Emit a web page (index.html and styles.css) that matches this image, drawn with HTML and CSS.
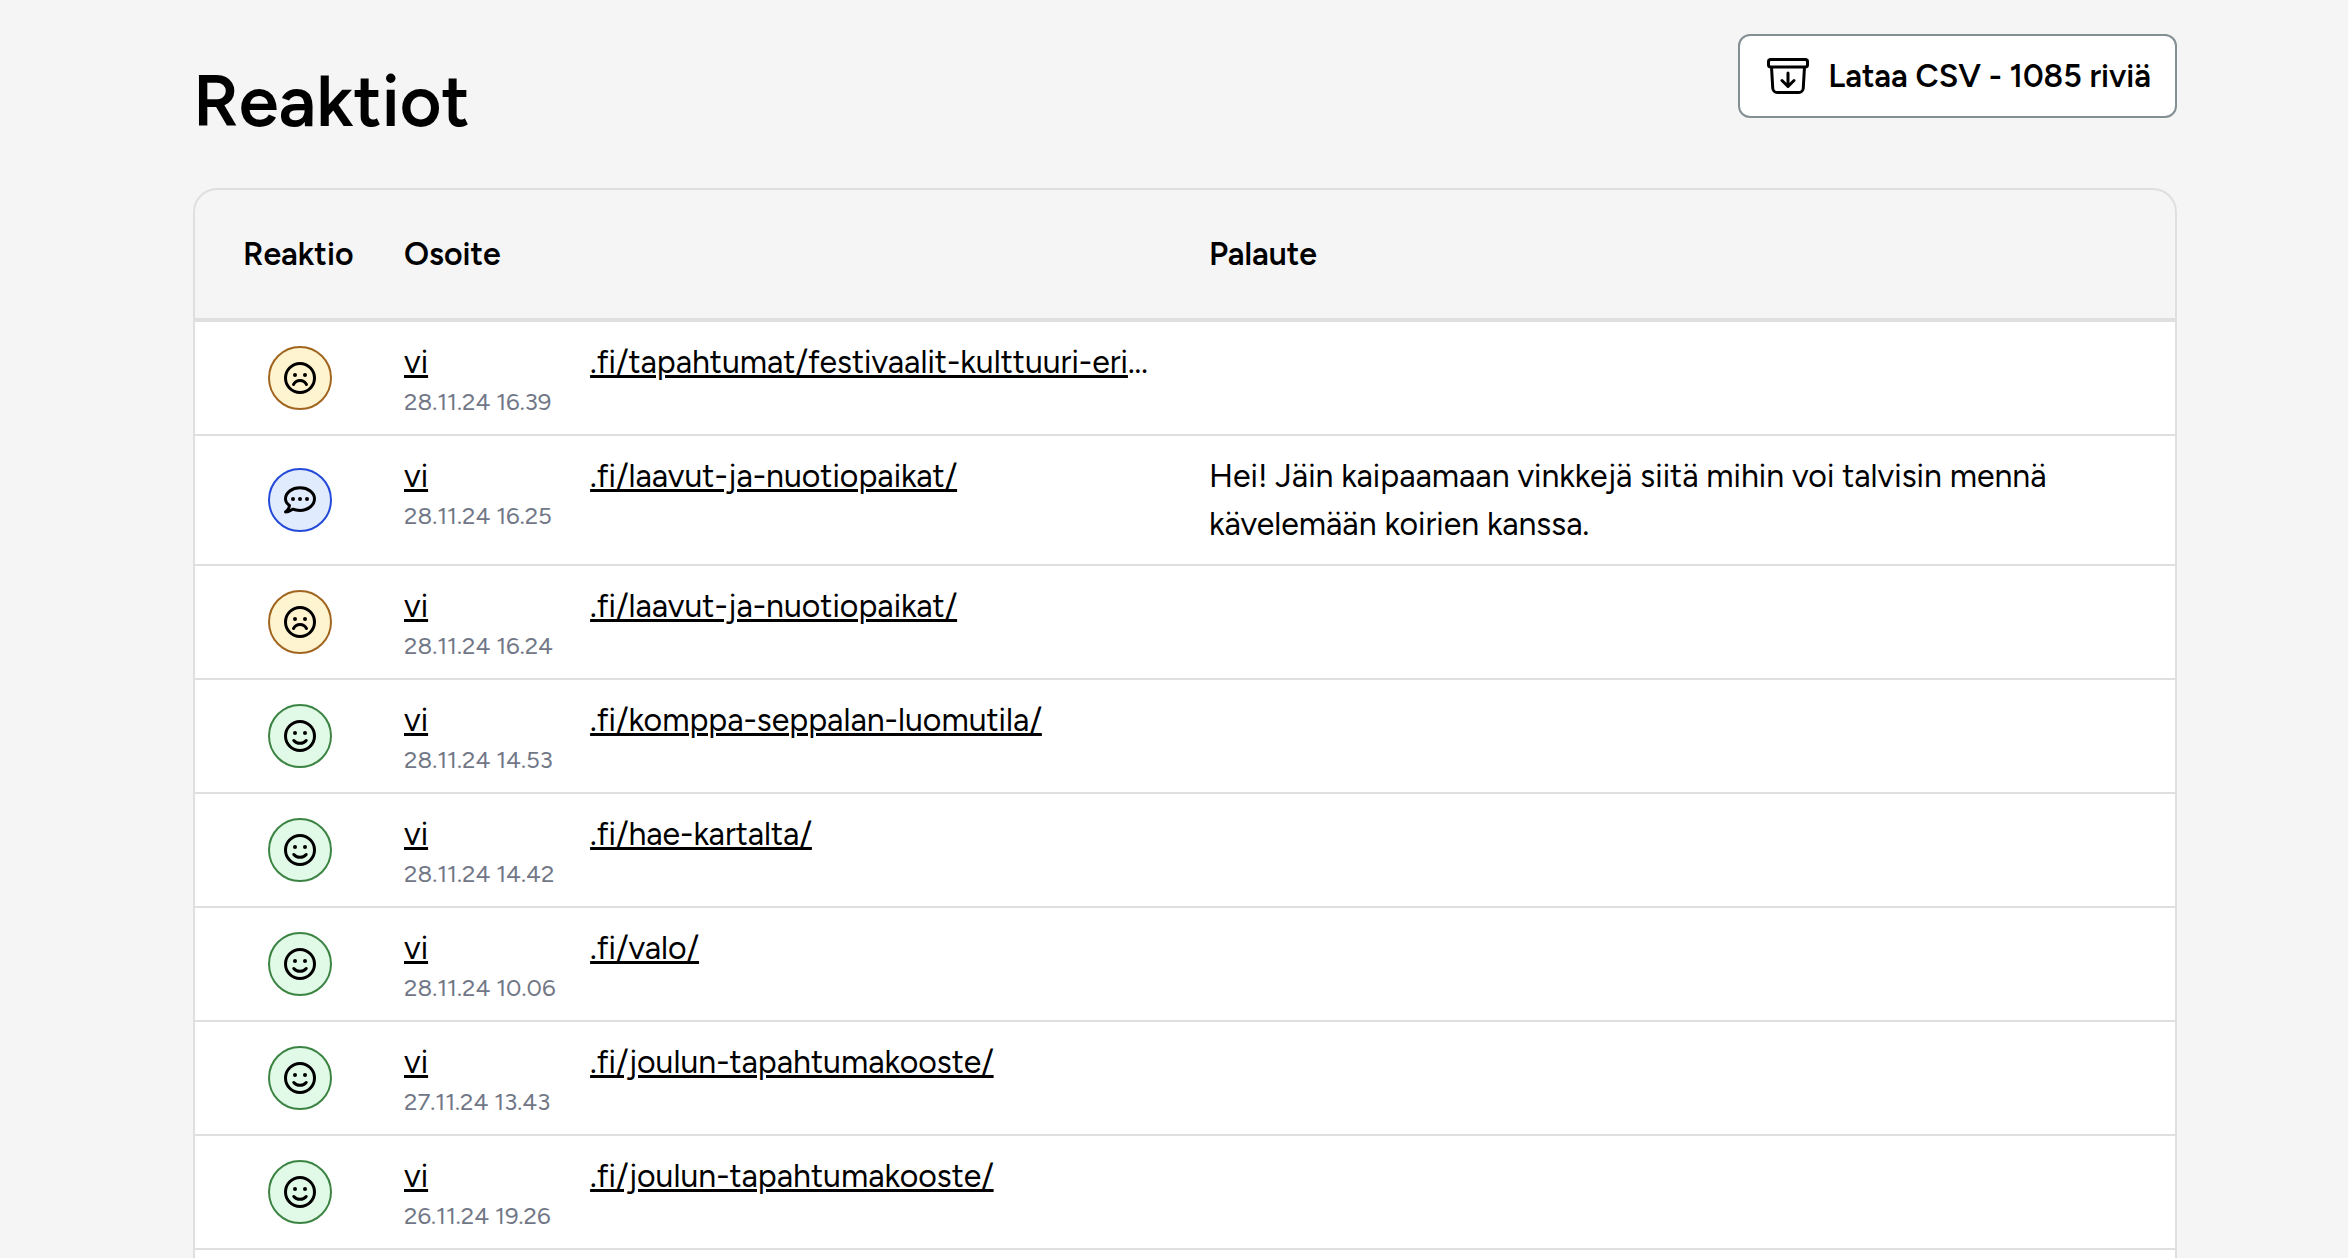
FILE: index.html
```
<!DOCTYPE html>
<html lang="fi">
<head>
<meta charset="UTF-8">
<meta name="viewport" content="width=device-width, initial-scale=1.0">
<title>Reaktiot</title>
<link rel="stylesheet" href="styles.css">
</head>
<body>

<!-- shared icons -->
<svg class="sprite" aria-hidden="true">
    <symbol id="icon-sad" viewBox="0 0 32 32">
        <circle cx="16" cy="16" r="14.5" fill="none" stroke="currentColor" stroke-width="3"/>
        <circle cx="11" cy="13" r="2"/>
        <circle cx="21" cy="13" r="2"/>
        <path d="M9.500 22.500C11 19.700 13.500 18.500 16 18.500S21 19.700 22.500 22.500" fill="none" stroke="currentColor" stroke-width="3" stroke-linecap="round"/>
    </symbol>
    <symbol id="icon-happy" viewBox="0 0 32 32">
        <circle cx="16" cy="16" r="14.5" fill="none" stroke="currentColor" stroke-width="3"/>
        <circle cx="11" cy="13" r="2"/>
        <circle cx="21" cy="13" r="2"/>
        <path d="M9.800 20.500C11.300 22.300 13.300 23.300 16 23.300S20.700 22.300 22.200 20.500" fill="none" stroke="currentColor" stroke-width="3" stroke-linecap="round"/>
    </symbol>
    <symbol id="icon-comment" viewBox="0 0 32 32">
        <path d="M5.500 21.500C2.800 19.800 1.500 17.300 1.500 14.800C1.500 8.500 8 3.800 16 3.800S30.500 8.500 30.500 14.800S24 26.400 16 26.400C13.200 26.400 10.800 26 8.700 25.200C6.500 26.700 4 27.800 1.500 28C3.600 26.300 5.300 24 5.500 21.500Z" fill="none" stroke="currentColor" stroke-width="3" stroke-linejoin="round"/>
        <circle cx="9" cy="15" r="2"/>
        <circle cx="16" cy="15" r="2"/>
        <circle cx="23" cy="15" r="2"/>
    </symbol>
</svg>

<div class="container">
    <div class="header">
        <h1>Reaktiot</h1>
        <button type="button" class="download">
            <svg class="download-icon" viewBox="0 0 24 24" fill="none" stroke="currentColor" stroke-width="1.5" stroke-linecap="round" stroke-linejoin="round" aria-hidden="true"><path d="m20.250 7.500-.625 10.632a2.250 2.250 0 0 1-2.247 2.118H6.622a2.250 2.250 0 0 1-2.247-2.118L3.750 7.500m8.250 3v6.750m0 0-3-3m3 3 3-3M3.375 7.500h17.250c.621 0 1.125-.504 1.125-1.125v-1.500c0-.621-.504-1.125-1.125-1.125H3.375c-.621 0-1.125.504-1.125 1.125v1.500c0 .621.504 1.125 1.125 1.125Z"/></svg>
            Lataa CSV - 1085 riviä
        </button>
    </div>

    <div class="table-wrap">
    <table>
        <colgroup>
            <col class="col-reaction">
            <col class="col-address">
            <col>
        </colgroup>
        <thead>
            <tr>
                <th scope="col">Reaktio</th>
                <th scope="col">Osoite</th>
                <th scope="col">Palaute</th>
            </tr>
        </thead>
        <tbody>
            <tr>
                <td><span class="badge sad"><svg><use href="#icon-sad"/></svg></span></td>
                <td>
                    <div class="url"><a href="#">vi<span class="hidden-part"></span>.fi/tapahtumat/festivaalit-kulttuuri-eri</a>...</div>
                    <div class="date">28.11.24 16.39</div>
                </td>
                <td></td>
            </tr>
            <tr>
                <td><span class="badge comment"><svg><use href="#icon-comment"/></svg></span></td>
                <td>
                    <div class="url"><a href="#">vi<span class="hidden-part"></span>.fi/laavut-ja-nuotiopaikat/</a></div>
                    <div class="date">28.11.24 16.25</div>
                </td>
                <td>Hei! Jäin kaipaamaan vinkkejä siitä mihin voi talvisin mennä kävelemään koirien kanssa.</td>
            </tr>
            <tr>
                <td><span class="badge sad"><svg><use href="#icon-sad"/></svg></span></td>
                <td>
                    <div class="url"><a href="#">vi<span class="hidden-part"></span>.fi/laavut-ja-nuotiopaikat/</a></div>
                    <div class="date">28.11.24 16.24</div>
                </td>
                <td></td>
            </tr>
            <tr>
                <td><span class="badge happy"><svg><use href="#icon-happy"/></svg></span></td>
                <td>
                    <div class="url"><a href="#">vi<span class="hidden-part"></span>.fi/komppa-seppalan-luomutila/</a></div>
                    <div class="date">28.11.24 14.53</div>
                </td>
                <td></td>
            </tr>
            <tr>
                <td><span class="badge happy"><svg><use href="#icon-happy"/></svg></span></td>
                <td>
                    <div class="url"><a href="#">vi<span class="hidden-part"></span>.fi/hae-kartalta/</a></div>
                    <div class="date">28.11.24 14.42</div>
                </td>
                <td></td>
            </tr>
            <tr>
                <td><span class="badge happy"><svg><use href="#icon-happy"/></svg></span></td>
                <td>
                    <div class="url"><a href="#">vi<span class="hidden-part"></span>.fi/valo/</a></div>
                    <div class="date">28.11.24 10.06</div>
                </td>
                <td></td>
            </tr>
            <tr>
                <td><span class="badge happy"><svg><use href="#icon-happy"/></svg></span></td>
                <td>
                    <div class="url"><a href="#">vi<span class="hidden-part"></span>.fi/joulun-tapahtumakooste/</a></div>
                    <div class="date">27.11.24 13.43</div>
                </td>
                <td></td>
            </tr>
            <tr>
                <td><span class="badge happy"><svg><use href="#icon-happy"/></svg></span></td>
                <td>
                    <div class="url"><a href="#">vi<span class="hidden-part"></span>.fi/joulun-tapahtumakooste/</a></div>
                    <div class="date">26.11.24 19.26</div>
                </td>
                <td></td>
            </tr>
            <tr>
                <td></td>
                <td></td>
                <td></td>
            </tr>
        </tbody>
    </table>
    </div>
</div>

</body>
</html>
```
FILE: styles.css
```
* {
    box-sizing: border-box;
}
body {
    margin: 0;
    height: 100vh;
    overflow: hidden;
    background-color: #f5f5f5;
    color: #000;
    font-family: Figtree, Lato, sans-serif;
    font-size: 32px;
    line-height: 48px;
}
.sprite {
    display: none;
}
.container {
    padding: 34px 171px 0 193px;
}
.header {
    display: flex;
    justify-content: space-between;
    align-items: flex-start;
    margin-bottom: 42px;
}
h1 {
    margin: 22px 0 0;
    font-size: 72px;
    line-height: 90px;
    font-weight: 600;
}
.download {
    display: flex;
    align-items: center;
    gap: 16px;
    padding: 16px 24px;
    border: 2px solid #838f92;
    border-radius: 12px;
    background-color: #fff;
    color: #000;
    font: inherit;
    font-weight: 600;
    cursor: pointer;
}
.download-icon {
    width: 48px;
    height: 48px;
}
.table-wrap {
    border: 2px solid #dfdfdf;
    border-bottom: 0;
    border-radius: 24px 24px 0 0;
    overflow: hidden;
}
table {
    width: 100%;
    table-layout: fixed;
    border-collapse: separate;
    border-spacing: 0;
}
.col-reaction {
    width: 185px;
}
.col-address {
    width: 805px;
}
th {
    padding: 40px 24px;
    border-bottom: 4px solid #dfdfdf;
    font-weight: 600;
    text-align: left;
    white-space: nowrap;
}
td {
    padding: 16px 32px 16px 24px;
    border-bottom: 2px solid #dfdfdf;
    background-color: #fff;
    vertical-align: top;
}
th:first-child {
    padding: 40px 0 40px 48px;
}
td:first-child {
    padding: 0 0 0 25px;
    text-align: center;
    vertical-align: middle;
}
.badge {
    display: inline-flex;
    align-items: center;
    justify-content: center;
    width: 64px;
    height: 64px;
    border: 2px solid;
    border-radius: 50%;
    vertical-align: middle;
}
.badge svg {
    width: 32px;
    height: 32px;
    color: #000;
}
.sad {
    border-color: #a16520;
    background-color: #fef4d0;
}
.comment {
    border-color: #2549d8;
    background-color: #e0ecfe;
}
.happy {
    border-color: #3c8443;
    background-color: #e1f9e7;
}
.url {
    white-space: nowrap;
}
.url a {
    color: #000;
    text-decoration-thickness: 3px;
}
.hidden-part {
    display: inline-block;
    width: 162px;
}
.date {
    color: #717786;
    font-size: 24px;
    line-height: 32px;
}
```
